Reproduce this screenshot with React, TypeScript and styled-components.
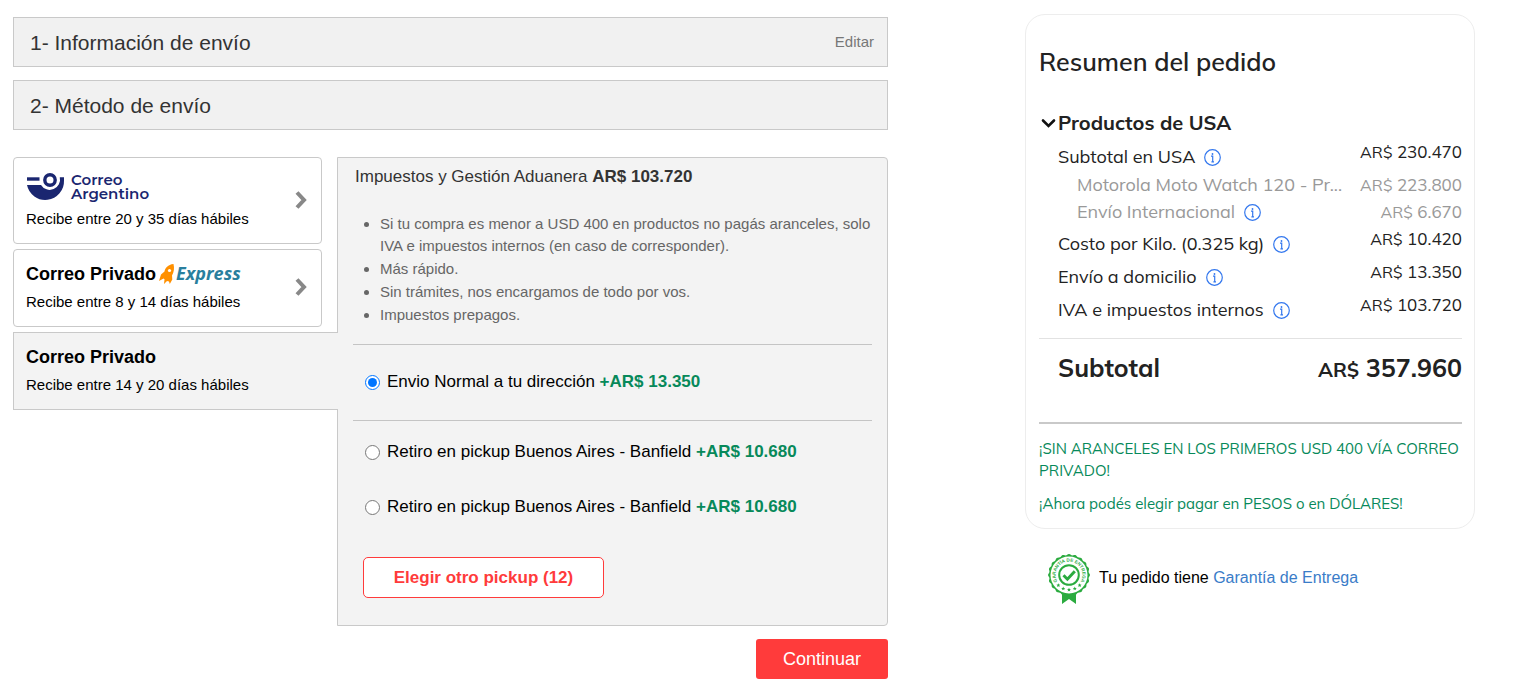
import React from 'react';
import styled, { createGlobalStyle } from 'styled-components';

const sans = '"Liberation Sans", Arial, sans-serif';
const rounded = 'Mulish, Lato, sans-serif';
const border = '#c9c9c9';
const panel = '#f3f3f3';
const green = '#07895a';
const red = '#ff3b3b';

const Global = createGlobalStyle`
  *, *::before, *::after { box-sizing: border-box; }
  body { margin: 0; background: #fff; color: #000; font-family: ${sans}; }
  h1, h2, p, ul, dl, dd, dt, hr, fieldset { margin: 0; padding: 0; }
  button { font-family: inherit; cursor: pointer; }
`;

const Page = styled.div`
  display: grid;
  grid-template-columns: minmax(0, 1fr) 450px;
  column-gap: 137px;
  align-items: start;
  padding: 14px 48px 8px 13px;
  @media (max-width: 1200px) {
    column-gap: 32px;
  }
`;

const Checkout = styled.main`
  display: flex;
  flex-direction: column;
  gap: 13px;
  padding-top: 3px;
`;

const StepBar = styled.section`
  display: flex;
  align-items: center;
  justify-content: space-between;
  height: 50px;
  padding: 0 13px 0 16px;
  background: #f1f1f1;
  border: 1px solid ${border};
`;

const StepTitle = styled.h2`
  padding-top: 2px;
  font-size: 21px;
  font-weight: 400;
  line-height: 24px;
  color: #333;
`;

const EditButton = styled.button`
  padding: 0;
  border: 0;
  background: none;
  font-size: 15px;
  line-height: 20px;
  color: #777;
`;

const Methods = styled.div`
  display: grid;
  grid-template-columns: 324px minmax(0, 1fr);
  padding-top: 14px;
`;

const Carriers = styled.div`
  display: flex;
  flex-direction: column;
  gap: 5px;
`;

const Carrier = styled.button<{ $active?: boolean }>`
  position: relative;
  display: flex;
  align-items: center;
  justify-content: space-between;
  margin-right: ${(p) => (p.$active ? '-1px' : '15px')};
  padding: 12px 14px 14px 12px;
  border: 1px solid ${border};
  border-right-width: ${(p) => (p.$active ? 0 : '1px')};
  border-radius: ${(p) => (p.$active ? 0 : '4px')};
  background: ${(p) => (p.$active ? panel : '#fff')};
  color: #000;
  text-align: left;
`;

const CarrierText = styled.span`
  display: flex;
  flex-direction: column;
  gap: 6px;
`;

const CarrierName = styled.span`
  display: flex;
  align-items: center;
  gap: 3px;
  font-size: 18px;
  font-weight: 700;
  line-height: 24px;
`;

const CarrierLogo = styled.span`
  display: flex;
  padding-top: 3px;
  svg {
    overflow: visible;
  }
`;

const Delivery = styled.span`
  font-size: 15px;
  line-height: 20px;
`;

const Details = styled.section`
  padding: 7px 15px 27px;
  border: 1px solid ${border};
  border-radius: 0 4px 4px 0;
  background: ${panel};
`;

const TaxLine = styled.p`
  padding-left: 2px;
  font-size: 17px;
  line-height: 24px;
  color: #333;
`;

const Benefits = styled.ul`
  && {
    display: flex;
    flex-direction: column;
    gap: 1px;
    margin: 24px 0 18px;
    padding-left: 27px;
  }
  font-size: 15px;
  line-height: 22px;
  color: #666;
`;

const Rule = styled.hr`
  border: 0;
  border-top: 1px solid #c4c4c4;
`;

const Choices = styled.fieldset<{ $top: number; $bottom: number }>`
  && {
    padding: ${(p) => p.$top}px 0 ${(p) => p.$bottom}px 12px;
  }
  display: flex;
  flex-direction: column;
  gap: 31px;
  border: 0;
`;

const Choice = styled.label`
  display: flex;
  align-items: center;
  gap: 7px;
  font-size: 17px;
  line-height: 24px;
`;

const Radio = styled.input`
  flex: none;
  width: 15px;
  height: 15px;
  margin: 0;
`;

const Price = styled.strong`
  color: ${green};
`;

const PickupButton = styled.button`
  width: 241px;
  height: 41px;
  margin-left: 10px;
  border: 1px solid ${red};
  border-radius: 5px;
  background: #fff;
  color: ${red};
  font-size: 17px;
  font-weight: 700;
`;

const ContinueButton = styled.button`
  align-self: flex-end;
  width: 132px;
  height: 40px;
  border: 0;
  border-radius: 3px;
  background: ${red};
  color: #fff;
  font-size: 18px;
`;

const Card = styled.section`
  padding: 29px 12px 13px 13px;
  border: 1px solid #ededed;
  border-radius: 20px;
  font-family: ${rounded};
  color: #222;
`;

const CardTitle = styled.h1`
  font-size: 25px;
  font-weight: 600;
  line-height: 36px;
`;

const GroupToggle = styled.button`
  display: flex;
  align-items: center;
  gap: 1px;
  margin: 29px 0 2px;
  padding: 0;
  border: 0;
  background: none;
  color: #222;
  font-size: 20px;
  font-weight: 700;
  line-height: 28px;
`;

const Costs = styled.dl`
  padding-left: 19px;
`;

const CostRow = styled.div<{ $sub?: boolean }>`
  display: flex;
  justify-content: space-between;
  height: ${(p) => (p.$sub ? 27 : 33)}px;
  line-height: 26px;
  color: ${(p) => (p.$sub ? '#999' : 'inherit')};
  dt {
    display: flex;
    align-items: center;
    gap: 9px;
    height: 26px;
    margin-top: ${(p) => (p.$sub ? 0 : '5px')};
    padding-left: ${(p) => (p.$sub ? '19px' : 0)};
    font-size: 18px;
    white-space: nowrap;
  }
  dd {
    font-size: 17px;
    white-space: nowrap;
  }
`;

const Currency = styled.span`
  font-size: 16px;
`;

const TotalRow = styled.div`
  display: flex;
  justify-content: space-between;
  align-items: baseline;
  margin: 13px 0 34px;
  padding: 11px 0 0 19px;
  border-top: 1px solid #e2e2e2;
  font-size: 25px;
  font-weight: 700;
  line-height: 36px;
`;

const TotalCurrency = styled.span`
  font-size: 20px;
`;

const Notes = styled.div`
  display: flex;
  flex-direction: column;
  gap: 11px;
  padding-top: 14px;
  border-top: 2px solid #c9c9c9;
  font-size: 15px;
  line-height: 22px;
  color: ${green};
`;

const Guarantee = styled.div`
  display: flex;
  align-items: center;
  gap: 9px;
  margin-top: 25px;
  padding-left: 23px;
  font-size: 16px;
  line-height: 20px;
  p {
    padding-bottom: 4px;
  }
  svg {
    overflow: visible;
  }
`;

const GuaranteeLink = styled.a`
  color: #3a7cc8;
  text-decoration: none;
`;

const InfoButton = styled.button`
  display: flex;
  padding: 0;
  border: 0;
  background: none;
`;

const CorreoArgentinoLogo = () => (
  <svg width="124" height="30" viewBox="0 0 124 30" role="img" aria-label="Correo Argentino">
    <g fill="none" stroke="#1a2670">
      <path d="M1 6h12.500" strokeWidth="3.400" />
      <circle cx="24" cy="7" r="5.200" strokeWidth="3.400" />
    </g>
    <path d="M1 12H15A10.300 10.300 0 0 0 33.800 4.300H38V7.500A18.700 18.700 0 0 1 1 12z" fill="#1a2670" />
    <g fill="#1a2670" fontFamily="Montserrat, Inter, sans-serif" fontWeight="600" fontSize="15">
      <text x="45" y="12">Correo</text>
      <text x="45" y="26">Argentino</text>
    </g>
  </svg>
);

const ExpressLogo = () => (
  <svg width="86" height="24" viewBox="0 0 86 24" role="img" aria-label="Express">
    <path
      d="M14.500 2C9 2.500 6 6 5.500 9.500L2 12.500 0 19l4.500-2.500 1 .8-.5 4.700 3-3 2 .5.8 2.500 2.500-4.500-.3-4C15 10 15.500 6 14.500 2z"
      fill="#ff9000"
    />
    <circle cx="10.500" cy="8.500" r="1.600" fill="#fff" />
    <text x="17" y="18" fill="#2a7f9e" fontFamily="Open Sans, sans-serif" fontSize="18" fontWeight="700" fontStyle="italic">
      Express
    </text>
  </svg>
);

const ChevronRight = () => (
  <svg width="12" height="20" viewBox="0 0 12 20" aria-hidden="true">
    <path d="M2 2.500L9 10l-7 7.500" fill="none" stroke="#888" strokeWidth="4" />
  </svg>
);

const ChevronDown = () => (
  <svg width="18" height="12" viewBox="0 0 18 12" aria-hidden="true">
    <path d="M4 3.500l5.500 5.500L15 3.500" fill="none" stroke="#111" strokeWidth="2.600" strokeLinecap="round" />
  </svg>
);

const Info = ({ about }: { about: string }) => (
  <InfoButton aria-label={`Más información sobre ${about}`}>
    <svg width="17" height="17" viewBox="0 0 17 17" aria-hidden="true">
      <g fill="none" stroke="#3478ee" strokeWidth="1.200">
        <circle cx="8.500" cy="8.500" r="7.800" />
        <path d="M7 7.200h1.700v6M7.400 12.800h2.600" />
      </g>
      <circle cx="8.500" cy="5" r="0.900" fill="#3478ee" />
    </svg>
  </InfoButton>
);

const scallops = Array.from({ length: 120 }, (_, i) => {
  const a = (i / 120) * Math.PI * 2;
  const r = 20.4 + 0.6 * Math.cos(a * 20);
  return `${(21 + r * Math.cos(a)).toFixed(2)},${(21 + r * Math.sin(a)).toFixed(2)}`;
}).join(' ');

const stars = [-46, -23, 0, 23, 46].map((deg) => {
  const a = ((90 + deg) * Math.PI) / 180;
  return [21 + 14.8 * Math.cos(a), 21 + 14.8 * Math.sin(a)];
});

const Seal = () => (
  <svg width="42" height="51" viewBox="0 0 42 51" role="img" aria-label="Garantía de Entrega">
    <path d="M14 36h14v14l-7-5-7 5z" fill="#2bab3f" />
    <polygon points={scallops} fill="#2bab3f" />
    <circle cx="21" cy="21" r="18.500" fill="#fff" />
    <circle cx="21" cy="21" r="9.800" fill="none" stroke="#2bab3f" strokeWidth="2" />
    <path d="M15.500 21.300l3.900 3.900 7.400-7.900" fill="none" stroke="#2bab3f" strokeWidth="3" />
    <path id="seal-arc" d="M9.860 28.430a13.400 13.400 0 1 1 22.280 0" fill="none" />
    <text fill="#2bab3f" fontFamily="Liberation Sans, sans-serif" fontSize="4.600" fontWeight="700">
      <textPath href="#seal-arc" startOffset="50%" textAnchor="middle">GARANTÍA DE ENTREGA</textPath>
    </text>
    {stars.map(([x, y]) => (
      <path
        key={x}
        transform={`translate(${x} ${y})`}
        d="M0-2l.6 1.300 1.400.1-1.100.9.400 1.400L0 1l-1.300.7.4-1.400-1.100-.9 1.400-.1z"
        fill="#2bab3f"
      />
    ))}
  </svg>
);

const costs = [
  { label: 'Subtotal en USA', value: '230.470', info: true },
  { label: 'Motorola Moto Watch 120 - Pr...', value: '223.800', sub: true },
  { label: 'Envío Internacional', value: '6.670', sub: true, info: true },
  { label: 'Costo por Kilo. (0.325 kg)', value: '10.420', info: true },
  { label: 'Envío a domicilio', value: '13.350', info: true },
  { label: 'IVA e impuestos internos', value: '103.720', info: true },
];

export default function App() {
  return (
    <>
      <Global />
      <Page>
        <Checkout>
          <StepBar>
            <StepTitle>1- Información de envío</StepTitle>
            <EditButton>Editar</EditButton>
          </StepBar>
          <StepBar>
            <StepTitle>2- Método de envío</StepTitle>
          </StepBar>
          <Methods>
            <Carriers>
              <Carrier>
                <CarrierText>
                  <CarrierLogo>
                    <CorreoArgentinoLogo />
                  </CarrierLogo>
                  <Delivery>Recibe entre 20 y 35 días hábiles</Delivery>
                </CarrierText>
                <ChevronRight />
              </Carrier>
              <Carrier>
                <CarrierText>
                  <CarrierName>
                    Correo Privado <ExpressLogo />
                  </CarrierName>
                  <Delivery>Recibe entre 8 y 14 días hábiles</Delivery>
                </CarrierText>
                <ChevronRight />
              </Carrier>
              <Carrier $active aria-pressed="true">
                <CarrierText>
                  <CarrierName>Correo Privado</CarrierName>
                  <Delivery>Recibe entre 14 y 20 días hábiles</Delivery>
                </CarrierText>
              </Carrier>
            </Carriers>
            <Details>
              <TaxLine>
                Impuestos y Gestión Aduanera <strong>AR$ 103.720</strong>
              </TaxLine>
              <Benefits>
                <li>
                  Si tu compra es menor a USD 400 en productos no pagás aranceles, solo IVA e
                  impuestos internos (en caso de corresponder).
                </li>
                <li>Más rápido.</li>
                <li>Sin trámites, nos encargamos de todo por vos.</li>
                <li>Impuestos prepagos.</li>
              </Benefits>
              <Rule />
              <Choices $top={25} $bottom={26} aria-label="Envío a domicilio">
                <Choice>
                  <Radio type="radio" name="delivery" defaultChecked />
                  <span>
                    Envio Normal a tu dirección <Price>+AR$ 13.350</Price>
                  </span>
                </Choice>
              </Choices>
              <Rule />
              <Choices $top={19} $bottom={38} aria-label="Retiro en pickup">
                <Choice>
                  <Radio type="radio" name="delivery" />
                  <span>
                    Retiro en pickup Buenos Aires - Banfield <Price>+AR$ 10.680</Price>
                  </span>
                </Choice>
                <Choice>
                  <Radio type="radio" name="delivery" />
                  <span>
                    Retiro en pickup Buenos Aires - Banfield <Price>+AR$ 10.680</Price>
                  </span>
                </Choice>
              </Choices>
              <PickupButton>Elegir otro pickup (12)</PickupButton>
            </Details>
          </Methods>
          <ContinueButton>Continuar</ContinueButton>
        </Checkout>
        <aside>
          <Card>
            <CardTitle>Resumen del pedido</CardTitle>
            <GroupToggle aria-expanded="true">
              <ChevronDown />
              Productos de USA
            </GroupToggle>
            <Costs>
              {costs.map((c) => (
                <CostRow key={c.label} $sub={c.sub}>
                  <dt>
                    {c.label}
                    {c.info && <Info about={c.label} />}
                  </dt>
                  <dd>
                    <Currency>AR$</Currency> {c.value}
                  </dd>
                </CostRow>
              ))}
            </Costs>
            <TotalRow>
              <span>Subtotal</span>
              <span>
                <TotalCurrency>AR$</TotalCurrency> 357.960
              </span>
            </TotalRow>
            <Notes>
              <p>¡SIN ARANCELES EN LOS PRIMEROS USD 400 VÍA CORREO PRIVADO!</p>
              <p>¡Ahora podés elegir pagar en PESOS o en DÓLARES!</p>
            </Notes>
          </Card>
          <Guarantee>
            <Seal />
            <p>
              Tu pedido tiene <GuaranteeLink href="#garantia">Garantía de Entrega</GuaranteeLink>
            </p>
          </Guarantee>
        </aside>
      </Page>
    </>
  );
}
